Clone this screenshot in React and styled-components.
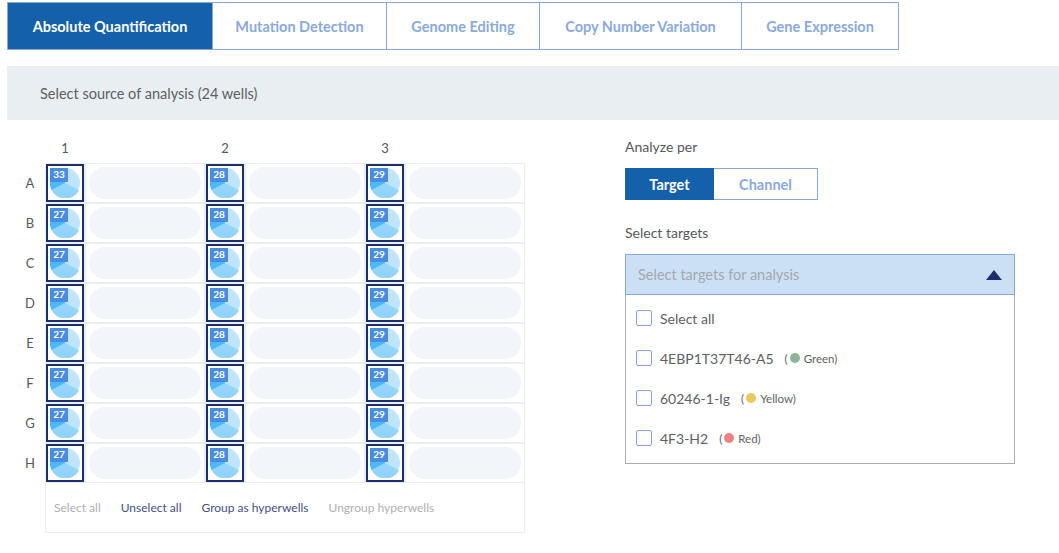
import React from 'react';
import styled, { createGlobalStyle } from 'styled-components';

const GlobalStyle = createGlobalStyle`
  body {
    margin: 0;
    background: #fff;
    font-family: 'Lato', 'Liberation Sans', sans-serif;
    color: #55585c;
  }
`;

const Page = styled.div`
  padding: 2px 0 20px 7px;
`;

const Tabs = styled.div`
  display: flex;
  width: 892px;
  height: 48px;
  box-sizing: border-box;
  border: 1px solid #88a8da;
`;

const Tab = styled.button`
  flex: 0 0 ${(props) => props.$width}px;
  box-sizing: border-box;
  border: none;
  border-left: ${(props) => (props.$first ? 'none' : '1px solid #88a8da')};
  background: ${(props) => (props.$active ? '#1560aa' : '#fff')};
  color: ${(props) => (props.$active ? '#fff' : '#8aa9dc')};
  font-family: inherit;
  font-size: 14.5px;
  font-weight: 700;
  padding: 0;
`;

const Banner = styled.div`
  margin-top: 16px;
  height: 54px;
  display: flex;
  align-items: center;
  padding-left: 33px;
  background: #e9eef2;
  font-size: 14.5px;
  color: #5c5f63;
`;

const Content = styled.div`
  display: flex;
  margin-top: 18px;
`;

const PlateSection = styled.div`
  display: grid;
  grid-template-columns: 38px 480px;
  grid-template-rows: 25px auto;
  width: 618px;
  flex-shrink: 0;
`;

const ColumnLabels = styled.div`
  grid-column: 2;
  display: grid;
  grid-template-columns: repeat(3, 160px);
  font-size: 13px;
  line-height: 20px;
`;

const ColumnLabel = styled.div`
  width: 40px;
  text-align: center;
`;

const RowLabels = styled.div`
  display: grid;
  grid-template-rows: repeat(8, 40px);
  padding-top: 1px;
  font-size: 13px;
`;

const RowLabel = styled.div`
  display: flex;
  align-items: center;
  justify-content: center;
  padding-left: 8px;
  height: 38px;
`;

const Plate = styled.div`
  width: 480px;
`;

const WellGrid = styled.div`
  display: grid;
  grid-template-columns: repeat(3, 38px 118px);
  grid-auto-rows: 38px;
  gap: 2px;
  padding: 1px;
  box-sizing: border-box;
  background: #e9eef3;
`;

const Well = styled.div`
  position: relative;
  box-sizing: border-box;
  border: 2px solid #1c2f6c;
  background: #fff;
  display: flex;
  align-items: center;
  justify-content: center;
`;

const Badge = styled.span`
  position: absolute;
  left: 2px;
  top: 2px;
  width: 18px;
  height: 14px;
  background: #4a8de0;
  color: #fff;
  font-size: 10px;
  font-weight: 700;
  line-height: 12px;
  text-align: center;
`;

const PillCell = styled.div`
  background: #fff;
  padding: 3px;
`;

const Pill = styled.div`
  height: 32px;
  border-radius: 16px;
  background: #f2f5f9;
`;

const PlateFooter = styled.div`
  display: flex;
  align-items: center;
  gap: 20px;
  height: 50px;
  box-sizing: border-box;
  padding: 0 0 0 8px;
  border: 1px solid #e9eef3;
  border-top: none;
  font-size: 12px;
`;

const FooterLink = styled.span`
  color: ${(props) => (props.$disabled ? '#aeb0b4' : '#45507f')};
`;

const Panel = styled.div`
  width: 390px;
  flex-shrink: 0;
`;

const Label = styled.div`
  font-size: 14px;
  line-height: 18px;
  color: #55585c;
`;

const Toggle = styled.div`
  display: flex;
  width: 193px;
  height: 32px;
  margin: 12px 0 24px;
  box-sizing: border-box;
  border: 1px solid #88a8da;
`;

const ToggleButton = styled.button`
  flex: ${(props) => (props.$active ? '0 0 89px' : '1')};
  border: none;
  padding: 0;
  margin: ${(props) => (props.$active ? '-1px 0 -1px -1px' : '0')};
  background: ${(props) => (props.$active ? '#1560aa' : '#fff')};
  color: ${(props) => (props.$active ? '#fff' : '#8aa9dc')};
  font-family: inherit;
  font-size: 14.5px;
  font-weight: 700;
`;

const SelectHead = styled.div`
  margin-top: 12px;
  height: 41px;
  box-sizing: border-box;
  display: flex;
  align-items: center;
  justify-content: space-between;
  padding: 0 12px 0 12px;
  background: #cce0f5;
  border: 1px solid #88a8da;
  color: #a4a8ad;
  font-size: 14.5px;
`;

const Options = styled.div`
  box-sizing: border-box;
  height: 169px;
  border: 1px solid #a9abad;
  border-top: none;
  padding: 3px 10px 0;
`;

const Option = styled.label`
  display: flex;
  align-items: center;
  gap: 8px;
  height: 40px;
  font-size: 14px;
  color: #5c5f63;
`;

const Check = styled.span`
  width: 16px;
  height: 16px;
  box-sizing: border-box;
  border: 1px solid #85a5dc;
  border-radius: 2px;
  flex-shrink: 0;
`;

const Channel = styled.span`
  display: inline-flex;
  align-items: center;
  margin-left: 3px;
  font-size: 11.5px;
`;

const Dot = styled.span`
  width: 10px;
  height: 10px;
  border-radius: 50%;
  margin: 0 4px 0 2px;
  background: ${(props) => props.$color};
`;

function Pie() {
  return (
    <svg width="30" height="30" viewBox="0 0 30 30">
      <circle cx="15" cy="15" r="15" fill="#bfe4fb" />
      <path d="M15 15 L28.9 22.5 A15.5 15.5 0 0 1 1.6 22 Z" fill="#93d4fd" />
      <path d="M15 15 L1.6 22 A15 15 0 0 1 15 0 Z" fill="#4db8fb" />
    </svg>
  );
}

const rows = ['A', 'B', 'C', 'D', 'E', 'F', 'G', 'H'];
const columns = [
  { label: 1, count: 27 },
  { label: 2, count: 28 },
  { label: 3, count: 29 },
];
const tabs = [
  { name: 'Absolute Quantification', width: 204, active: true },
  { name: 'Mutation Detection', width: 174 },
  { name: 'Genome Editing', width: 153 },
  { name: 'Copy Number Variation', width: 202 },
  { name: 'Gene Expression', width: 157 },
];
const targets = [
  { name: '4EBP1T37T46-A5', channel: 'Green', color: '#8db39b' },
  { name: '60246-1-Ig', channel: 'Yellow', color: '#e9c95b' },
  { name: '4F3-H2', channel: 'Red', color: '#ee8080' },
];

export default function App() {
  return (
    <Page>
      <GlobalStyle />
      <Tabs>
        {tabs.map((tab, i) => (
          <Tab key={tab.name} $width={tab.width} $active={tab.active} $first={i === 0}>
            {tab.name}
          </Tab>
        ))}
      </Tabs>
      <Banner>Select source of analysis (24 wells)</Banner>
      <Content>
        <PlateSection>
          <ColumnLabels>
            {columns.map((col) => (
              <ColumnLabel key={col.label}>{col.label}</ColumnLabel>
            ))}
          </ColumnLabels>
          <RowLabels>
            {rows.map((row) => (
              <RowLabel key={row}>{row}</RowLabel>
            ))}
          </RowLabels>
          <Plate>
            <WellGrid>
              {rows.map((row) =>
                columns.map((col) => (
                  <React.Fragment key={row + col.label}>
                    <Well>
                      <Pie />
                      <Badge>{row === 'A' && col.label === 1 ? 33 : col.count}</Badge>
                    </Well>
                    <PillCell>
                      <Pill />
                    </PillCell>
                  </React.Fragment>
                ))
              )}
            </WellGrid>
            <PlateFooter>
              <FooterLink $disabled>Select all</FooterLink>
              <FooterLink>Unselect all</FooterLink>
              <FooterLink>Group as hyperwells</FooterLink>
              <FooterLink $disabled>Ungroup hyperwells</FooterLink>
            </PlateFooter>
          </Plate>
        </PlateSection>
        <Panel>
          <Label>Analyze per</Label>
          <Toggle>
            <ToggleButton $active>Target</ToggleButton>
            <ToggleButton>Channel</ToggleButton>
          </Toggle>
          <Label>Select targets</Label>
          <SelectHead>
            Select targets for analysis
            <svg width="16" height="10" viewBox="0 0 16 10">
              <path d="M8 0 L16 10 L0 10 Z" fill="#1c2f6c" />
            </svg>
          </SelectHead>
          <Options>
            <Option>
              <Check />
              Select all
            </Option>
            {targets.map((t) => (
              <Option key={t.name}>
                <Check />
                <span>{t.name}</span>
                <Channel>
                  (<Dot $color={t.color} />
                  {t.channel})
                </Channel>
              </Option>
            ))}
          </Options>
        </Panel>
      </Content>
    </Page>
  );
}
